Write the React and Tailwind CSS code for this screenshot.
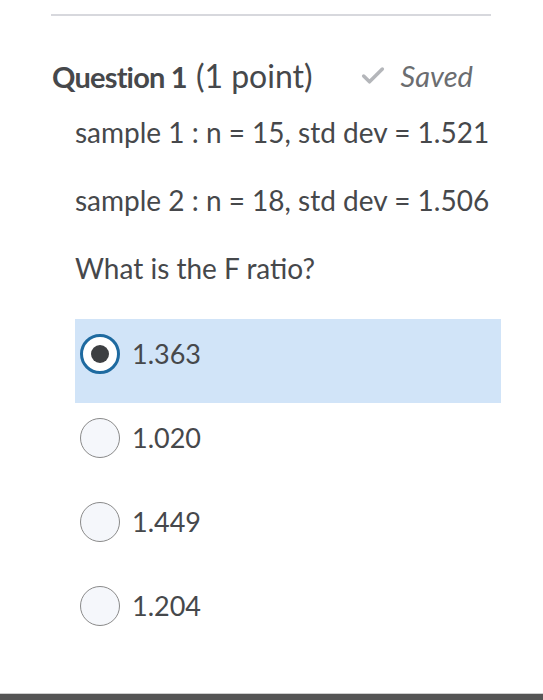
import { Check } from 'lucide-react'

const options = [
  { value: '1.363', selected: true },
  { value: '1.020' },
  { value: '1.449' },
  { value: '1.204' },
]

function Radio({ selected }) {
  if (selected) {
    return (
      <span className="flex h-[40px] w-[40px] shrink-0 items-center justify-center rounded-full border-[3px] border-[#1e6aa0] bg-white">
        <span className="h-[18px] w-[18px] rounded-full bg-[#3d3f42]" />
      </span>
    )
  }
  return <span className="h-[40px] w-[40px] shrink-0 rounded-full border-[1.5px] border-[#8a8a8a] bg-[#f5f7fb]" />
}

export default function App() {
  return (
    <div className="relative h-[700px] w-[543px] overflow-hidden bg-white font-['Lato','Open_Sans',sans-serif] text-[#46484b]">
      <div className="px-[51px] pt-[14px]">
        <div className="h-[2px] w-[440px] bg-[#d7d8dd]" />
      </div>

      {/* Question header */}
      <div className="mt-[42px] flex h-[36px] items-center pl-[52px]">
        <h2 className="flex items-baseline leading-[36px]">
          <span className="text-[29px] font-bold tracking-[-0.8px]">Question 1</span>
          <span className="ml-[9px] text-[32px]">(1 point)</span>
        </h2>
        <span className="ml-[46px] flex items-center gap-[14px] text-[29px] italic text-[#6b6d70]">
          <Check className="h-[28px] w-[28px] text-[#b4b6ba]" strokeWidth={3} />
          Saved
        </span>
      </div>

      {/* Question body */}
      <div className="pl-[75px] pr-[42px] text-[28px] leading-[34px]">
        <p className="mt-[21px]">sample 1 : n = 15, std dev = 1.521</p>
        <p className="mt-[34px]">sample 2 : n = 18, std dev = 1.506</p>
        <p className="mt-[34px]">What is the F ratio?</p>

        <div className="mt-[34px] flex flex-col">
          {options.map((o) => (
            <label
              key={o.value}
              className={`flex h-[84px] items-start gap-[12px] pl-[5px] pt-[15px] ${o.selected ? 'bg-[#d1e4f8]' : ''}`}
            >
              <Radio selected={o.selected} />
              <span className="text-[27px] leading-[40px]">{o.value}</span>
            </label>
          ))}
        </div>
      </div>

      <div className="absolute bottom-0 left-0 right-0 h-[7px] border-t border-[#cfcfcf] bg-[#555555]" />
    </div>
  )
}
